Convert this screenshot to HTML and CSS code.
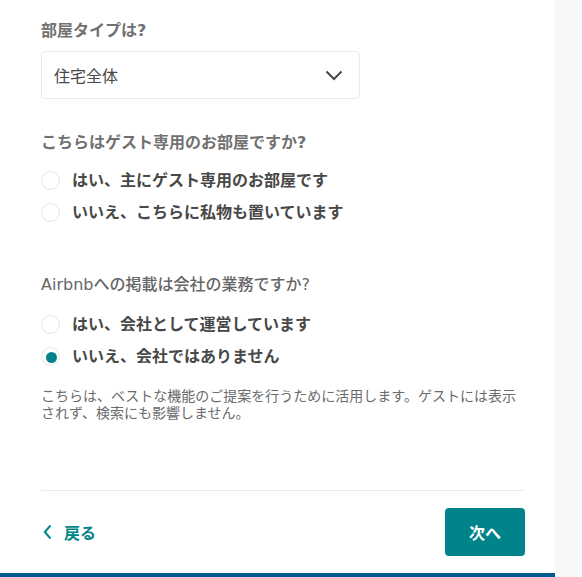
FILE: index.html
```html
<!DOCTYPE html>
<html lang="ja">
<head>
<meta charset="utf-8">
<link rel="stylesheet" href="styles.css">
</head>
<body>
<div class="page">
  <main class="main">
    <div class="content">
      <div class="q-title first">部屋タイプは?</div>
      <div class="select">
        <span>住宅全体</span>
        <svg class="chev" width="18" height="11" viewBox="0 0 18 11"><path d="M1.5 1.5 L9 9 L16.5 1.5" fill="none" stroke="#484848" stroke-width="2"/></svg>
      </div>

      <div class="q-title q2">こちらはゲスト専用のお部屋ですか?</div>
      <div class="radios">
        <div class="row"><span class="radio"></span><span class="label">はい、主にゲスト専用のお部屋です</span></div>
        <div class="row"><span class="radio"></span><span class="label">いいえ、こちらに私物も置いています</span></div>
      </div>

      <div class="q-title q3">Airbnbへの掲載は会社の業務ですか?</div>
      <div class="radios">
        <div class="row"><span class="radio"></span><span class="label">はい、会社として運営しています</span></div>
        <div class="row"><span class="radio checked"></span><span class="label">いいえ、会社ではありません</span></div>
      </div>

      <p class="help">こちらは、ベストな機能のご提案を行うために活用します。ゲストには表示されず、検索にも影響しません。</p>

      <div class="footer">
        <a class="back"><svg width="9" height="16" viewBox="0 0 9 16"><path d="M7.5 1.5 L1.8 8 L7.5 14.5" fill="none" stroke="#008489" stroke-width="2"/></svg><span>戻る</span></a>
        <button class="next">次へ</button>
      </div>
    </div>
    <div class="bar"></div>
  </main>
  <aside class="side"></aside>
</div>
</body>
</html>
```
FILE: styles.css
```css
html, body {
  margin: 0;
  padding: 0;
  height: 100%;
  background: #f8f8f8;
  font-family: "Noto Sans CJK JP", "Noto Sans", sans-serif;
}
.page {
  display: flex;
  height: 577px;
  overflow: hidden;
}
.main {
  width: 555px;
  background: #fff;
  display: flex;
  flex-direction: column;
}
.side {
  flex: 1;
  background: #f8f8f8;
}
.content {
  padding: 0 30px 0 41px;
  flex: 1;
}
.q-title {
  font-family: "DejaVu Sans", "Noto Sans CJK JP", sans-serif;
  font-size: 16px;
  line-height: 20px;
  font-weight: 700;
  color: #717171;
}
.q-title.first { margin-top: 21px; }
.q-title.q2 { margin-top: 34px; }
.q-title.q3 {
  margin-top: 48px;
  font-weight: 500;
  color: #666666;
}
.select {
  margin-top: 10px;
  width: 319px;
  height: 48px;
  box-sizing: border-box;
  border: 1px solid #ebebeb;
  border-radius: 4px;
  display: flex;
  align-items: center;
  justify-content: space-between;
  padding: 0 16px 0 12px;
  font-size: 16px;
  color: #484848;
}
.chev { margin-top: 1px; }
.radios { margin-top: 10px; }
.q3 + .radios { margin-top: 12px; }
.row {
  height: 32px;
  display: flex;
  align-items: center;
}
.radio {
  width: 19px;
  height: 19px;
  box-sizing: border-box;
  border: 1px solid #e4e4e4;
  border-radius: 50%;
  margin-right: 12px;
  display: flex;
  align-items: center;
  justify-content: center;
  margin-top: 3px;
}
.radio.checked::after {
  content: "";
  width: 11px;
  height: 11px;
  border-radius: 50%;
  background: #008489;
  margin: 2px 0 0 1px;
}
.label {
  font-size: 16px;
  font-weight: 700;
  color: #484848;
  line-height: 20px;
}
.help {
  margin: 16px 0 0;
  font-size: 14px;
  line-height: 17px;
  color: #6b6b6b;
}
.footer {
  margin-top: 69px;
  border-top: 1px solid #ebebeb;
  padding-top: 17px;
  display: flex;
  align-items: center;
  justify-content: space-between;
}
.back {
  display: flex;
  align-items: center;
  gap: 12px;
  color: #008489;
  font-size: 16px;
  font-weight: 700;
  margin-left: 2px;
}
.next {
  width: 80px;
  height: 48px;
  border: none;
  border-radius: 4px;
  background: #008489;
  color: #fff;
  font-family: inherit;
  font-size: 16px;
  font-weight: 700;
  padding: 0;
}
.bar {
  height: 4px;
  background: #005c8e;
}
```
